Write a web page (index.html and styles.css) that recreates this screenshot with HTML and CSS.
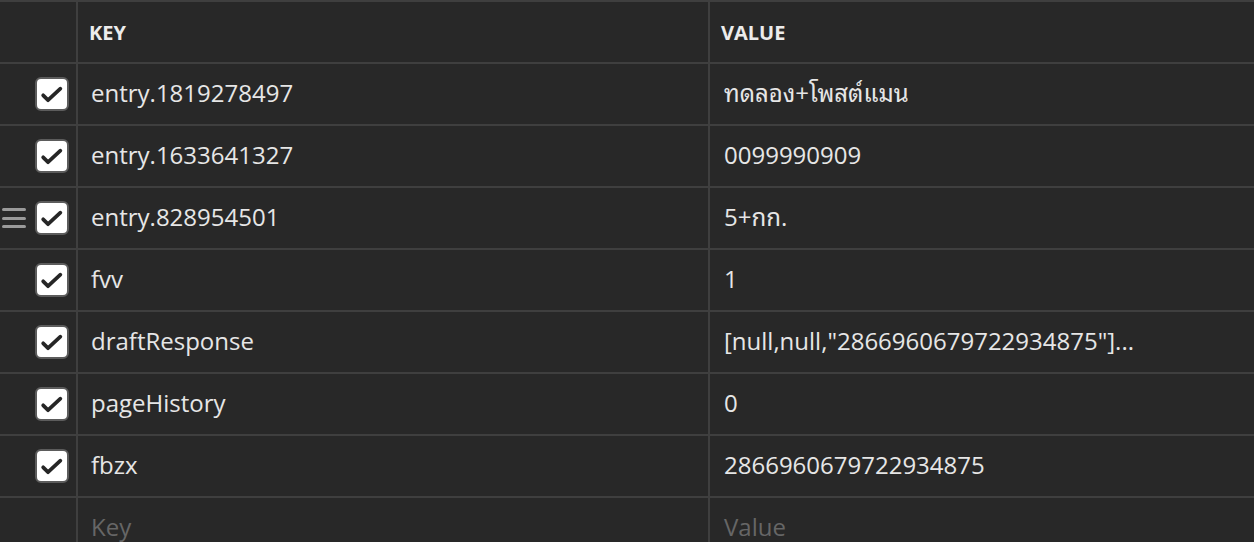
FILE: index.html
```html
<!DOCTYPE html>
<html lang="en">
<head>
<meta charset="utf-8">
<title>Params</title>
<link rel="stylesheet" href="styles.css">
</head>
<body>
<div class="table">
  <div class="cell head sel"></div>
  <div class="cell head key">KEY</div>
  <div class="cell head val">VALUE</div>

  <div class="cell sel"><span class="box"><svg viewBox="0 0 34 34"><path d="M7 18.5 L12.5 24 L26.5 11"/></svg></span></div>
  <div class="cell key">entry.1819278497</div>
  <div class="cell val">ทดลอง+โพสต์แมน</div>

  <div class="cell sel"><span class="box"><svg viewBox="0 0 34 34"><path d="M7 18.5 L12.5 24 L26.5 11"/></svg></span></div>
  <div class="cell key">entry.1633641327</div>
  <div class="cell val">0099990909</div>

  <div class="cell sel"><span class="handle"><i></i><i></i><i></i></span><span class="box"><svg viewBox="0 0 34 34"><path d="M7 18.5 L12.5 24 L26.5 11"/></svg></span></div>
  <div class="cell key">entry.828954501</div>
  <div class="cell val">5+กก.</div>

  <div class="cell sel"><span class="box"><svg viewBox="0 0 34 34"><path d="M7 18.5 L12.5 24 L26.5 11"/></svg></span></div>
  <div class="cell key">fvv</div>
  <div class="cell val">1</div>

  <div class="cell sel"><span class="box"><svg viewBox="0 0 34 34"><path d="M7 18.5 L12.5 24 L26.5 11"/></svg></span></div>
  <div class="cell key">draftResponse</div>
  <div class="cell val">[null,null,"2866960679722934875"]...</div>

  <div class="cell sel"><span class="box"><svg viewBox="0 0 34 34"><path d="M7 18.5 L12.5 24 L26.5 11"/></svg></span></div>
  <div class="cell key">pageHistory</div>
  <div class="cell val">0</div>

  <div class="cell sel"><span class="box"><svg viewBox="0 0 34 34"><path d="M7 18.5 L12.5 24 L26.5 11"/></svg></span></div>
  <div class="cell key">fbzx</div>
  <div class="cell val">2866960679722934875</div>

  <div class="cell sel"></div>
  <div class="cell key ph">Key</div>
  <div class="cell val ph">Value</div>
</div>
</body>
</html>
```

FILE: styles.css
```css
html, body {
  margin: 0;
  padding: 0;
  background: #282828;
  overflow: hidden;
}

.table {
  display: grid;
  grid-template-columns: 76px 630px 1fr;
  grid-auto-rows: 60px;
  gap: 2px;
  padding-top: 2px;
  background: #3f3f3f;
  font-family: "Open Sans", "Noto Sans", "Noto Sans Thai Looped", "Noto Sans Thai", sans-serif;
  font-size: 24px;
  line-height: 33px;
  color: #e6e6e6;
}

.cell {
  background: #282828;
  display: flex;
  align-items: center;
  white-space: nowrap;
  overflow: hidden;
}

.key {
  padding-left: 13px;
  padding-bottom: 3px;
}

.val {
  padding-left: 14px;
  padding-bottom: 3px;
}

.head {
  font-size: 20px;
  line-height: 27px;
  font-weight: 700;
  color: #ececec;
}

.head.key {
  padding-left: 11px;
  padding-bottom: 0;
}

.head.val {
  padding-left: 11px;
  padding-bottom: 0;
}

.sel {
  justify-content: flex-end;
  padding: 0 7px 0 2px;
}

.ph {
  color: #666666;
}

.box {
  width: 30px;
  height: 30px;
  border: 2px solid #5c5c5c;
  border-radius: 6px;
  background: #ffffff;
  display: flex;
}

.box svg {
  width: 30px;
  height: 30px;
}

.box path {
  fill: none;
  stroke: #262626;
  stroke-width: 4.2;
  stroke-linecap: round;
  stroke-linejoin: round;
}

.handle {
  margin-right: auto;
  width: 24px;
  display: flex;
  flex-direction: column;
  gap: 5.5px;
}

.handle i {
  display: block;
  height: 3px;
  border-radius: 2px;
  background: #9a9a9a;
}
```
